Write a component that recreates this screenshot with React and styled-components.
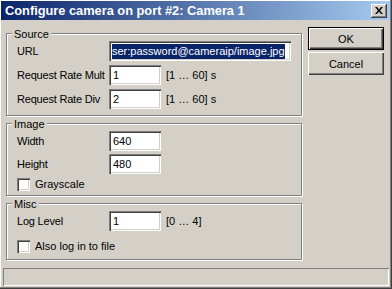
import React from 'react';
import styled, { createGlobalStyle } from 'styled-components';

const GlobalStyle = createGlobalStyle`
	html, body	{
		margin:0;
		padding:0;
		background-color:#d4d0c8;
	}

	body	{
		font-family:"Liberation Sans", Arial, sans-serif;
		font-size:11px;
		color:#000;
	}
`;

const Window = styled.div`
	display:flex;
	flex-direction:column;
	width:392px;
	height:289px;
	padding:1px 2px 2px 1px;
	box-sizing:border-box;
	background-color:#d4d0c8;
	box-shadow:inset -1px -1px 0 #404040, inset -2px -2px 0 #808080, inset 1px 1px 0 #fff;
`;

const TitleBar = styled.div`
	display:flex;
	align-items:center;
	height:19px;
	padding:0 3px 0 4px;
	background:linear-gradient(to right, #0a246a, #a6caf0);
	color:#fff;
	font-weight:bold;
	font-size:12.8px;
	white-space:nowrap;
`;

const CloseBtn = styled.div`
	display:flex;
	justify-content:center;
	align-items:center;
	width:16px;
	height:14px;
	margin-left:auto;
	background-color:#d4d0c8;
	box-shadow:inset -1px -1px 0 #404040, inset 1px 1px 0 #fff, inset -2px -2px 0 #808080;
`;

const Content = styled.div`
	display:flex;
	flex:1;
	padding:7px 0 0 5px;
`;

const LeftCol = styled.div`
	display:flex;
	flex-direction:column;
	gap:7px;
	width:296px;
	padding-top:6px;
`;

const Group = styled.div`
	position:relative;
	display:flex;
	flex-direction:column;
	gap:${p => p.$gap}px;
	padding:7px 0 ${p => p.$pb}px 10px;
	border:1px solid #808080;
	box-shadow:inset 1px 1px 0 #fff, 1px 1px 0 #fff;
`;

const Legend = styled.span`
	position:absolute;
	top:-6px;
	left:5px;
	padding:0 2px;
	line-height:13px;
	background-color:#d4d0c8;
`;

const Row = styled.div`
	display:flex;
	align-items:center;
	height:20px;
`;

const Label = styled.div`
	width:92px;
	white-space:nowrap;
	letter-spacing:-0.2px;
`;

const Edit = styled.div`
	display:flex;
	align-items:center;
	width:${p => p.$w}px;
	height:20px;
	padding:0 4px;
	box-sizing:border-box;
	overflow:hidden;
	white-space:nowrap;
	background-color:#fff;
	box-shadow:inset 1px 1px 0 #808080, inset 2px 2px 0 #404040, inset -1px -1px 0 #fff, inset -2px -2px 0 #d4d0c8;

	&.sel	{
		padding-left:3px;
	}
`;

const Selected = styled.span`
	line-height:15px;
	color:#fff;
	background-color:#0a246a;
`;

const Unit = styled.span`
	margin-left:5px;
`;

const CheckRow = styled.label`
	display:flex;
	align-items:center;
	height:14px;
`;

const CheckBox = styled.span`
	width:13px;
	height:13px;
	background-color:#fff;
	box-shadow:inset 1px 1px 0 #808080, inset 2px 2px 0 #404040, inset -1px -1px 0 #fff, inset -2px -2px 0 #d4d0c8;
`;

const CheckText = styled.span`
	margin-left:5px;
`;

const RightCol = styled.div`
	display:flex;
	flex-direction:column;
	gap:2px;
	margin-left:6px;
`;

const Button = styled.button`
	width:76px;
	height:23px;
	padding:0;
	border:0;
	font-family:inherit;
	font-size:11px;
	color:#000;
	background-color:#d4d0c8;
	box-shadow:inset 1px 1px 0 #fff, inset -1px -1px 0 #404040, inset -2px -2px 0 #808080;

	&.default	{
		box-shadow:inset 0 0 0 1px #000, inset 2px 2px 0 #fff, inset -2px -2px 0 #404040, inset -3px -3px 0 #808080;
	}
`;

const StatusBar = styled.div`
	height:18px;
	margin:0 1px 1px 2px;
	box-shadow:inset 1px 1px 0 #808080, inset -1px -1px 0 #fff;
`;

const EditRow = ({ label, value, width = 52, unit }) => (
	<Row>
		<Label>{label}</Label>
		<Edit $w={width}>{value}</Edit>
		{unit && <Unit>{unit}</Unit>}
	</Row>
);

const Check = ({ text }) => (
	<CheckRow>
		<CheckBox />
		<CheckText>{text}</CheckText>
	</CheckRow>
);

const App = () => {
	return (
		<>
			<GlobalStyle />
			<Window>
				<TitleBar>
					Configure camera on port #2: Camera 1
					<CloseBtn>
						<svg width="8" height="7" viewBox="0 0 8 7">
							<path d="M0 0h2l2 2.5L6 0h2L5 3.5 8 7H6L4 4.5 2 7H0l3-3.5z" fill="#000" />
						</svg>
					</CloseBtn>
				</TitleBar>
				<Content>
					<LeftCol>
						<Group $gap={4} $pb={6}>
							<Legend>Source</Legend>
							<Row>
								<Label>URL</Label>
								<Edit $w={182} className="sel">
									<Selected>ser:password@cameraip/image.jpg</Selected>
								</Edit>
							</Row>
							<EditRow label="Request Rate Mult" value="1" unit="[1 … 60] s" />
							<EditRow label="Request Rate Div" value="2" unit="[1 … 60] s" />
						</Group>
						<Group $gap={3} $pb={4}>
							<Legend>Image</Legend>
							<EditRow label="Width" value="640" />
							<EditRow label="Height" value="480" />
							<Check text="Grayscale" />
						</Group>
						<Group $gap={8} $pb={6}>
							<Legend>Misc</Legend>
							<EditRow label="Log Level" value="1" unit="[0 … 4]" />
							<Check text="Also log in to file" />
						</Group>
					</LeftCol>
					<RightCol>
						<Button type="button" className="default">OK</Button>
						<Button type="button">Cancel</Button>
					</RightCol>
				</Content>
				<StatusBar />
			</Window>
		</>
	);
};

export default App;
